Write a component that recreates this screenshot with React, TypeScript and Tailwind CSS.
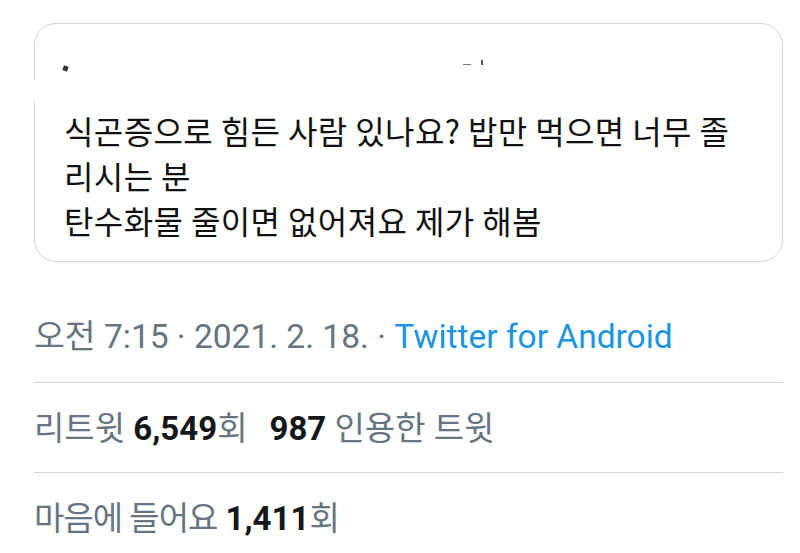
export default function App() {
  return (
    <div className="min-h-screen w-full bg-white pl-[34px] pr-[17px] pt-[23px] [font-family:Roboto,'Noto_Sans_CJK_KR',sans-serif]">
      <QuotedTweet />
      <div className="mt-[31px] text-[#66757f]">
        <div className="flex h-[90px] items-center border-b border-[#cfd6db] text-[33.5px]">
          <span>
            오전 7:15 · 2021. 2. 18. ·{" "}
            <span className="text-[#1b95e0]">Twitter for Android</span>
          </span>
        </div>
        <div className="flex h-[90px] items-center gap-[22px] border-b border-[#cfd6db] pt-[2px] text-[33px]">
          <span>
            리트윗 <b className="font-bold text-[#14171a]">6,549</b>회
          </span>
          <span>
            <b className="font-bold text-[#14171a]">987</b> 인용한 트윗
          </span>
        </div>
        <div className="flex h-[90px] items-center pt-[2px] text-[33px]">
          <span>
            <span className="tracking-[-1px]">마음에 들어요</span>{" "}
            <b className="font-bold text-[#14171a]">1,411</b>회
          </span>
        </div>
      </div>
    </div>
  );
}

function QuotedTweet() {
  return (
    <div className="relative h-[239px] rounded-[22px] border border-[#d6d6d6] px-[29px] pt-[84px]">
      {/* left edge is blanked where the header was cropped out */}
      <div className="absolute left-[-2px] top-[56px] h-[21px] w-[4px] bg-white" />
      <span className="absolute left-[28px] top-[42px] h-[5px] w-[5px] rotate-[20deg] bg-[#333]" />
      <span className="absolute left-[428px] top-[40px] h-[1px] w-[8px] bg-[#777]" />
      <span className="absolute left-[446px] top-[36px] h-[5px] w-[2px] bg-[#555]" />
      <p className="text-[32px] leading-[45px] tracking-[0.4px] text-[#111] [font-family:'Noto_Sans_CJK_KR',sans-serif]">
        식곤증으로 힘든 사람 있나요? 밥만 먹으면 너무 졸
        <br />
        리시는 분
        <br />
        탄수화물 줄이면 없어져요 제가 해봄
      </p>
    </div>
  );
}
